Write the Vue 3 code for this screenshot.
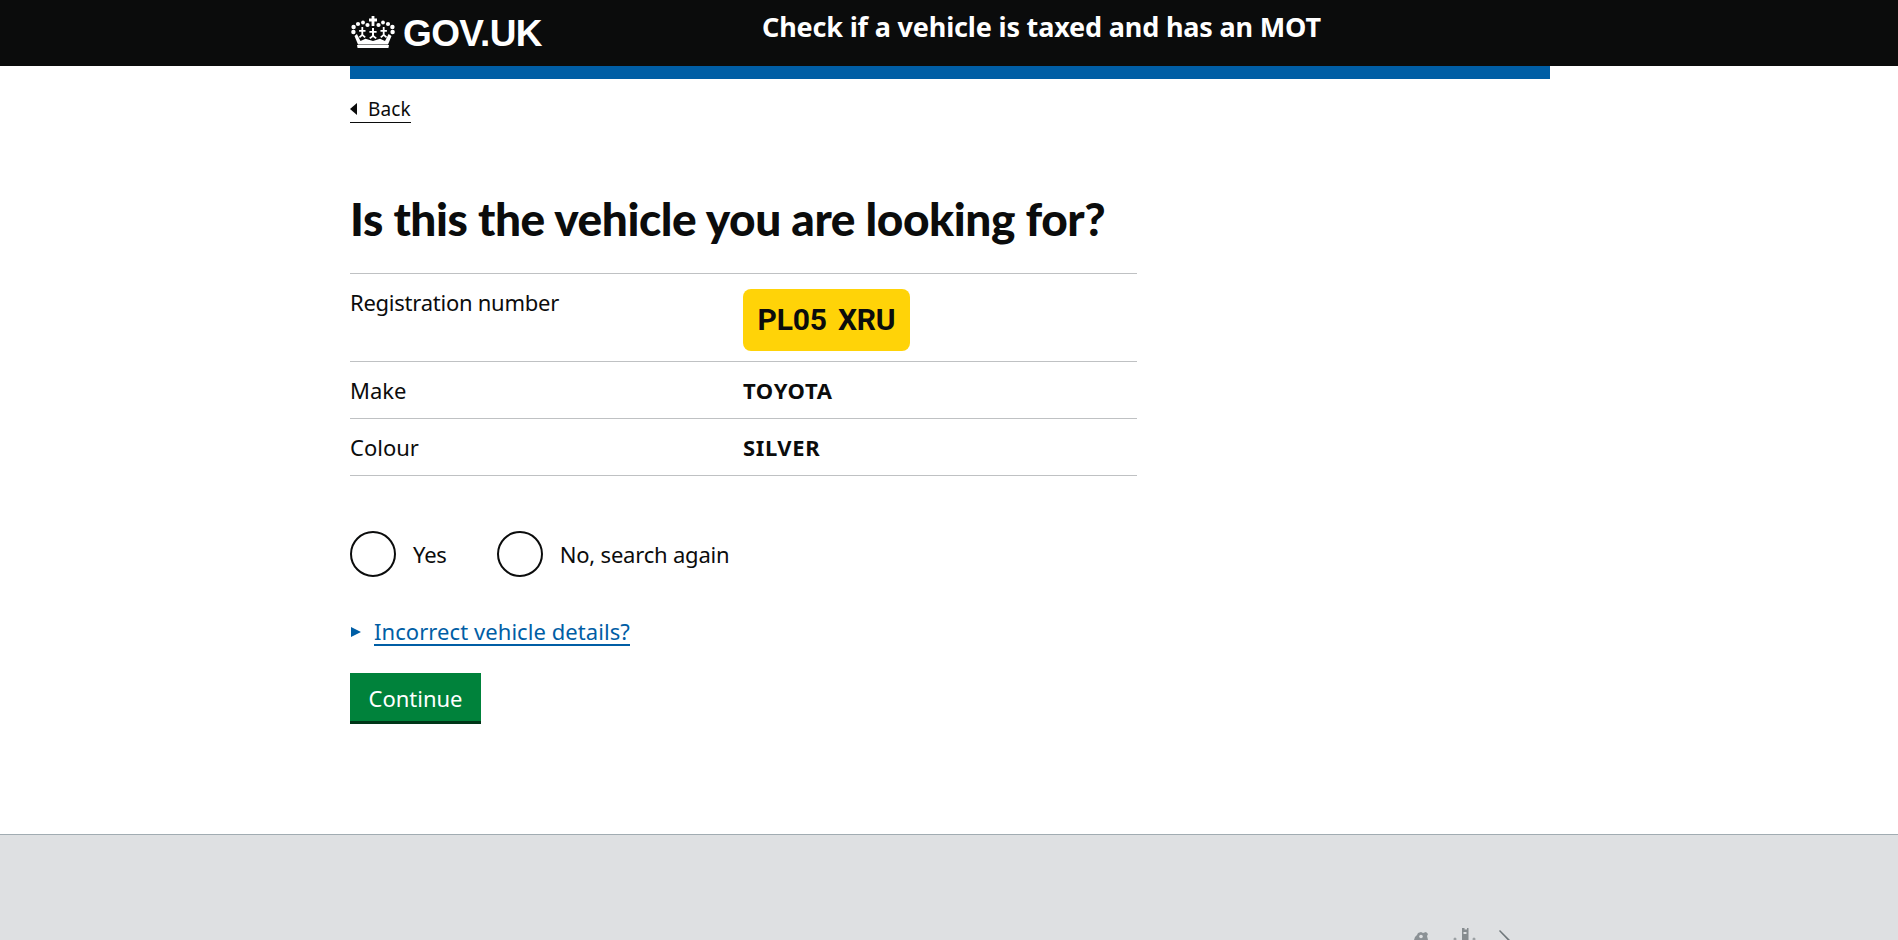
<script setup>
const rows = [
  { label: 'Make', value: 'TOYOTA' },
  { label: 'Colour', value: 'SILVER' }
];
</script>

<template>
  <div class="page">
    <header class="top">
      <div class="wrap top-inner">
        <a class="logo">
          <svg class="crown" width="44" height="32" viewBox="0 0 44 32" fill="#fff">
            <path d="M20.6 0h2.8v2.6H26v2.8h-2.600V10h-2.800V5.400H18V2.600h2.600z" />
            <circle cx="12" cy="6.500" r="1.900" />
            <circle cx="32" cy="6.500" r="1.900" />
            <circle cx="7" cy="8" r="2.100" />
            <circle cx="37" cy="8" r="2.100" />
            <circle cx="16.500" cy="9" r="2.100" />
            <circle cx="27.500" cy="9" r="2.100" />
            <circle cx="2.600" cy="11" r="2.200" />
            <circle cx="41.400" cy="11" r="2.200" />
            <circle cx="2.400" cy="16" r="2.200" />
            <circle cx="41.600" cy="16" r="2.200" />
            <path d="M10.400 11h1.800v3h2.300v1.800h-2.300v2.800l2.600 2.200-1.200 1.300-2.300-2-2.300 2-1.200-1.300 2.600-2.200v-2.800H8.100V14h2.300z" />
            <path d="M21 12h2v3h2.600v1.800H23v2.600l2.800 2.300-1.200 1.300L22 21l-2.600 2-1.200-1.300 2.800-2.300v-2.600h-2.600V15H21z" />
            <path d="M31.800 11h1.800v3h2.300v1.800h-2.300v2.800l2.600 2.200-1.200 1.300-2.300-2-2.300 2-1.200-1.300 2.600-2.200v-2.800h-2.300V14h2.300z" />
            <path d="M3.500 20l2.400-2 3.600 7 5-2.200L22 25l7-2.200 5 2.200 3.600-7 2.900 2-3.500 8.500H7z" />
            <path d="M6 29h32l-.6 3H6.600z" />
          </svg>
          <span class="logo-text">GOV.UK</span>
        </a>
        <span class="service">Check if a vehicle is taxed and has an MOT</span>
      </div>
    </header>

    <main class="wrap">
      <div class="blue-bar"></div>
      <a class="back"><span class="back-arrow"></span>Back</a>

      <h1 class="title">Is this the vehicle you are looking for?</h1>

      <dl class="details">
        <div class="row row-reg">
          <dt>Registration number</dt>
          <dd><span class="plate">PL05 XRU</span></dd>
        </div>
        <div v-for="row in rows" :key="row.label" class="row">
          <dt>{{ row.label }}</dt>
          <dd class="strong">{{ row.value }}</dd>
        </div>
      </dl>

      <div class="radios">
        <label class="radio"><span class="circle"></span>Yes</label>
        <label class="radio"><span class="circle"></span>No, search again</label>
      </div>

      <div class="summary">
        <span class="summary-arrow"></span>
        <a class="summary-link">Incorrect vehicle details?</a>
      </div>

      <button class="continue">Continue</button>
    </main>

    <footer class="foot">
      <div class="wrap foot-inner">
        <svg class="crest" width="102" height="12" viewBox="0 0 102 12" fill="#6f777b">
          <path d="M2 9l2-2 1-2 3-1 2 1 3-1 2 2-1 2 1 4H1z" opacity=".75" />
          <circle cx="8" cy="8.500" r="1.800" fill="#dee0e2" />
          <path d="M49 0h2.500v1.500H54V0h1.500v12H49z" opacity=".8" />
          <rect x="50.500" y="4" width="3" height="2" fill="#dee0e2" />
          <circle cx="42" cy="11" r="1.500" opacity=".6" />
          <circle cx="61" cy="11" r="1.500" opacity=".6" />
          <path d="M86 3l1-1 10 10h-2.500z" />
        </svg>
      </div>
    </footer>
  </div>
</template>

<style scoped>
.page {
  height: 940px;
  overflow: hidden;
  display: flex;
  flex-direction: column;
  font-family: "Noto Sans", sans-serif;
  color: #0b0c0c;
  background: #fff;
}

.wrap {
  width: 1200px;
  margin-left: 350px;
}

.top {
  background: #0b0c0c;
  height: 66px;
  flex: none;
}

.top-inner {
  display: flex;
  height: 66px;
}

.logo {
  display: flex;
  width: 412px;
  padding-top: 16px;
  box-sizing: border-box;
  color: #fff;
}

.crown {
  margin-left: 1px;
}

.logo-text {
  margin-left: 8px;
  margin-top: -4px;
  font: bold 37px/44px "Liberation Sans", sans-serif;
  letter-spacing: -0.6px;
}

.service {
  padding-top: 9px;
  color: #fff;
  font-size: 27px;
  line-height: 36px;
  font-weight: 700;
  letter-spacing: -0.17px;
}

.blue-bar {
  height: 13px;
  background: #005ea5;
}

.back {
  display: inline-flex;
  align-items: center;
  margin-top: 17px;
  height: 26px;
  border-bottom: 1px solid #0b0c0c;
  font-size: 19px;
  letter-spacing: 0.1px;
  color: #0b0c0c;
}

.back-arrow {
  width: 0;
  height: 0;
  margin-right: 11px;
  border-style: solid;
  border-width: 6px 7px 6px 0;
  border-color: transparent #0b0c0c transparent transparent;
}

.title {
  margin: 71px 0 0;
  font-family: "Lato", sans-serif;
  font-size: 46px;
  line-height: 50px;
  font-weight: 900;
  letter-spacing: -0.42px;
}

.details {
  width: 787px;
  margin: 29px 0 0;
  border-top: 1px solid #bfc1c3;
}

.row {
  display: flex;
  height: 56px;
  border-bottom: 1px solid #bfc1c3;
  align-items: center;
  font-size: 22px;
}

.row-reg {
  height: 87px;
  align-items: flex-start;
}

.row dt {
  width: 393px;
}

.row-reg dt {
  padding-top: 15px;
  line-height: 26px;
  letter-spacing: -0.25px;
}

.row dd {
  margin: 0;
}

.strong {
  font-weight: 700;
  letter-spacing: 0.6px;
}

.plate {
  display: block;
  margin-top: 15px;
  width: 167px;
  height: 62px;
  border-radius: 8px;
  background: #ffd308;
  font-family: "Roboto", sans-serif;
  font-size: 30px;
  font-weight: 700;
  line-height: 62px;
  text-align: center;
  letter-spacing: -0.2px;
  word-spacing: 4px;
}

.radios {
  display: flex;
  margin-top: 55px;
  gap: 50px;
}

.radio {
  display: flex;
  align-items: center;
  font-size: 22px;
  letter-spacing: -0.2px;
}

.circle {
  box-sizing: border-box;
  width: 46px;
  height: 46px;
  margin-right: 17px;
  border: 2px solid #0b0c0c;
  border-radius: 50%;
}

.summary {
  display: flex;
  align-items: center;
  margin-top: 41px;
}

.summary-arrow {
  width: 0;
  height: 0;
  margin: 0 13px 0 1px;
  border-style: solid;
  border-width: 5.5px 0 5.5px 10px;
  border-color: transparent transparent transparent #005ea5;
}

.summary-link {
  color: #005ea5;
  font-size: 22px;
  line-height: 26px;
  letter-spacing: 0.07px;
  border-bottom: 2px solid #005ea5;
}

.continue {
  display: block;
  width: 131px;
  height: 51px;
  margin-top: 27px;
  padding: 1px 0 0;
  border: 0;
  border-bottom: 3px solid #003618;
  background: #00823b;
  color: #fff;
  font-family: inherit;
  font-size: 22px;
}

.foot {
  flex: 1;
  margin-top: 110px;
  background: #dee0e2;
  border-top: 1px solid #a1acb2;
  display: flex;
  align-items: flex-end;
}

.foot-inner {
  display: flex;
  justify-content: flex-end;
}

.crest {
  display: block;
  margin-right: 35px;
}
</style>

<style>
html, body {
  margin: 0;
  overflow: hidden;
}
</style>
